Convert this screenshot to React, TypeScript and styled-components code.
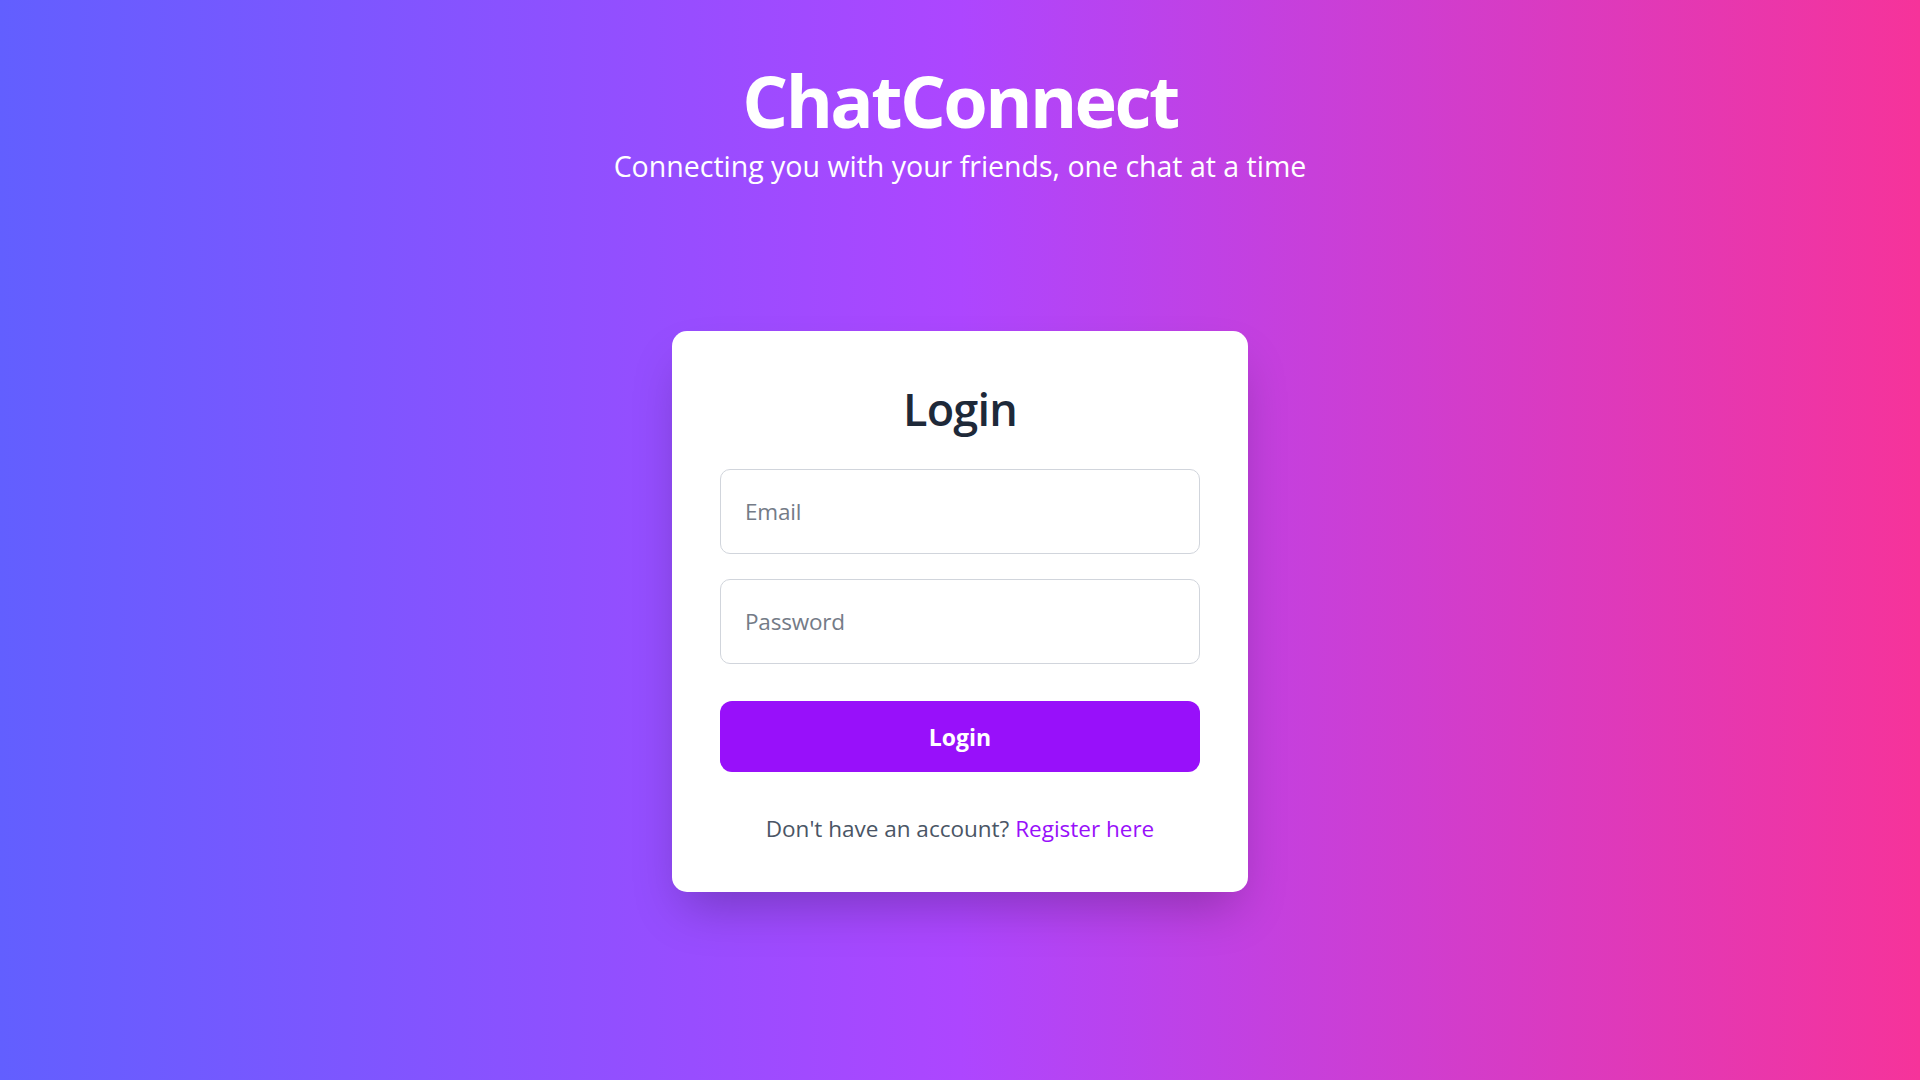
import styled, { createGlobalStyle } from "styled-components";

const GlobalStyle = createGlobalStyle`
  * {
    box-sizing: border-box;
  }
  html, body {
    margin: 0;
    padding: 0;
  }
  body {
    font-family: "Open Sans", "Noto Sans", sans-serif;
  }
`;

function App() {
  return (
    <>
      <GlobalStyle />
      <Page>
        <Header>
          <Title>ChatConnect</Title>
          <Tagline>Connecting you with your friends, one chat at a time</Tagline>
        </Header>
        <Card>
          <CardTitle>Login</CardTitle>
          <Form onSubmit={(e) => e.preventDefault()}>
            <Field type="email" placeholder="Email" />
            <Field type="password" placeholder="Password" />
            <SubmitBtn type="submit">Login</SubmitBtn>
          </Form>
          <Footnote>
            Don't have an account? <RegisterLink href="#">Register here</RegisterLink>
          </Footnote>
        </Card>
      </Page>
    </>
  );
}

export default App;

const Page = styled.div`
  min-height: 100vh;
  display: flex;
  flex-direction: column;
  align-items: center;
  background: linear-gradient(to right, #625fff, #ad46ff, #f6339a);
`;

const Header = styled.header`
  display: flex;
  flex-direction: column;
  align-items: center;
  padding-top: 64px;
  color: #fff;
`;

const Title = styled.h1`
  margin: 0;
  font-size: 72px;
  font-weight: 700;
  line-height: 1;
  letter-spacing: -2.6px;
`;

const Tagline = styled.p`
  margin: 12px 0 0;
  font-size: 28.5px;
  line-height: 36px;
`;

const Card = styled.div`
  width: 576px;
  margin-top: 147px;
  padding: 53px 48px 46px;
  background: #fff;
  border-radius: 15px;
  box-shadow: 0 25px 50px -12px rgba(0, 0, 0, 0.25);
  display: flex;
  flex-direction: column;
  align-items: center;
`;

const CardTitle = styled.h2`
  margin: 0 0 35px;
  font-size: 45px;
  line-height: 50px;
  font-weight: 600;
  color: #1e2939;
  letter-spacing: -0.8px;
`;

const Form = styled.form`
  width: 100%;
  display: flex;
  flex-direction: column;
  gap: 25px;
`;

const Field = styled.input`
  width: 100%;
  height: 85px;
  padding: 0 24px;
  border: 1.25px solid #d1d5dc;
  border-radius: 10px;
  font-family: inherit;
  font-size: 22.5px;
  color: #1e2939;
  outline: none;
  letter-spacing: -0.2px;

  &::placeholder {
    color: #747b87;
  }
`;

const SubmitBtn = styled.button`
  margin-top: 12px;
  height: 71px;
  border: none;
  border-radius: 12px;
  background: #9810fa;
  color: #fff;
  font-family: inherit;
  font-size: 23px;
  font-weight: 700;
  cursor: pointer;
`;

const Footnote = styled.p`
  margin: 39px 0 0;
  font-size: 22.5px;
  line-height: 35px;
  color: #4a5565;
`;

const RegisterLink = styled.a`
  color: #9810fa;
  text-decoration: none;
`;
